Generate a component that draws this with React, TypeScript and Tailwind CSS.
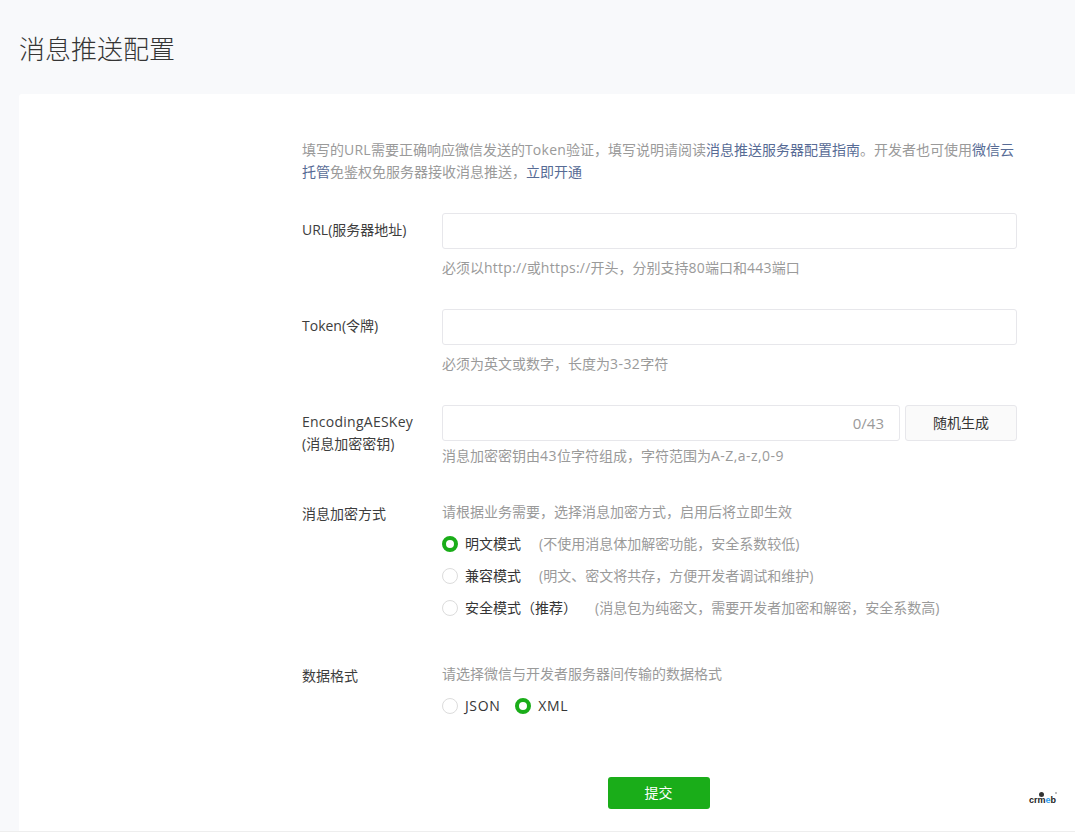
const font = "font-['Open_Sans','Noto_Sans_CJK_SC',sans-serif]";

function Radio({ checked, label, note, gap }: { checked?: boolean; label: string; note?: string; gap?: string }) {
  return (
    <label className="flex items-center h-8">
      {checked ? (
        <span className="w-4 h-4 rounded-full border-[4px] border-[#1aad19] bg-white shrink-0" />
      ) : (
        <span className="w-4 h-4 rounded-full border border-[#dcdcdc] bg-white shrink-0" />
      )}
      <span className="ml-[7px] text-sm leading-8 h-8 text-[#353535]">{label}</span>
      {note && <span className={`text-sm leading-8 h-8 text-[#9a9a9a] ${gap}`}>{note}</span>}
    </label>
  );
}

function Label({ children }: { children: React.ReactNode }) {
  return <div className="w-[140px] shrink-0 text-sm leading-[22px] text-[#3d3d3d]">{children}</div>;
}

export default function App() {
  return (
    <div className={`${font} h-[834px] bg-white overflow-hidden`}>
      <div className="h-[832px] bg-[#f8f9fb] pl-[19px] border-b border-[#eeeeee]">
        <h1 className="h-[94px] pt-[32px] text-[26px] leading-[34px] font-light text-[#353535]">消息推送配置</h1>

        <div className="relative h-[737px] bg-white rounded-tl-[3px] pl-[283px] pr-[58px] pt-[45px]">
          <p className="text-sm leading-[22px] text-[#9a9a9a] mb-[30px]">
            填写的<span className="tracking-[0.25px]">URL</span>需要正确响应微信发送的<span className="tracking-[0.25px]">Token</span>验证，填写说明请阅读
            <a className="text-[#576b95]">消息推送服务器配置指南</a>
            。开发者也可使用
            <a className="text-[#576b95]">微信云托管</a>
            免鉴权免服务器接收消息推送，
            <a className="text-[#576b95]">立即开通</a>
          </p>

          <div className="flex mb-[30px]">
            <Label><div className="pt-[6px]">URL(服务器地址)</div></Label>
            <div className="flex-1">
              <input className="block w-full h-9 border border-[#e7e7eb] rounded-[3px] bg-white" />
              <div className="mt-2 text-sm leading-[22px] text-[#9a9a9a]">
                必须以<span className="tracking-[0.25px]">http://</span>或<span className="tracking-[0.25px]">https://</span>开头，分别支持<span className="tracking-[0.25px]">80</span>端口和<span className="tracking-[0.25px]">443</span>端口
              </div>
            </div>
          </div>

          <div className="flex mb-[30px]">
            <Label><div className="pt-[6px]">Token(令牌)</div></Label>
            <div className="flex-1">
              <input className="block w-full h-9 border border-[#e7e7eb] rounded-[3px] bg-white" />
              <div className="mt-2 text-sm leading-[22px] text-[#9a9a9a]">
                必须为英文或数字，长度为<span className="tracking-[0.45px]">3-32</span>字符
              </div>
            </div>
          </div>

          <div className="flex mb-[34px]">
            <Label>
              <div className="pt-[6px] tracking-[0.25px]">EncodingAESKey</div>
              <div>(消息加密密钥)</div>
            </Label>
            <div className="flex-1">
              <div className="flex gap-[5px]">
                <div className="flex-1 h-9 border border-[#e7e7eb] rounded-[3px] bg-white flex items-center justify-end pr-[15px] text-[15px] text-[#9a9a9a]">0/43</div>
                <button className="w-28 h-9 border border-[#e7e7eb] rounded-[3px] bg-[#fafafa] text-sm text-[#353535]">随机生成</button>
              </div>
              <div className="mt-1 text-sm leading-[22px] text-[#9a9a9a]">
                消息加密密钥由<span className="tracking-[0.45px]">43</span>位字符组成，字符范围为<span className="tracking-[0.45px]">A-Z,a-z,0-9</span>
              </div>
            </div>
          </div>

          <div className="flex mb-[39px]">
            <Label><div className="pt-[2px]">消息加密方式</div></Label>
            <div className="flex-1">
              <div className="text-sm leading-[22px] text-[#9a9a9a] mb-[5px]">请根据业务需要，选择消息加密方式，启用后将立即生效</div>
              <Radio checked label="明文模式" note="(不使用消息体加解密功能，安全系数较低)" gap="ml-[18px]" />
              <Radio label="兼容模式" note="(明文、密文将共存，方便开发者调试和维护)" gap="ml-[18px]" />
              <Radio label="安全模式（推荐）" note="(消息包为纯密文，需要开发者加密和解密，安全系数高)" gap="ml-[18px]" />
            </div>
          </div>

          <div className="flex mb-[55px]">
            <Label><div className="pt-[2px]">数据格式</div></Label>
            <div className="flex-1">
              <div className="text-sm leading-[22px] text-[#9a9a9a] mb-[5px]">请选择微信与开发者服务器间传输的数据格式</div>
              <div className="flex gap-[15px] [&_span]:tracking-[0.6px]">
                <Radio label="JSON" />
                <Radio checked label="XML" />
              </div>
            </div>
          </div>

          <div className="flex justify-center pr-[2px]">
            <button className="w-[102px] h-8 rounded-[3px] bg-[#1aad19] text-white text-sm">提交</button>
          </div>

          <div className="absolute right-[19px] bottom-[26px] flex items-end text-[9px] leading-[10px] font-bold text-[#222] font-['Liberation_Sans',sans-serif]">
            <span>cr</span>
            <span className="relative">
              m
              <span className="absolute left-[2px] -top-[3px] w-[5px] h-[5px] rounded-full bg-[#333]" />
            </span>
            <span className="text-[#2b9cf2]">e</span>
            <span className="relative">
              b
              <span className="absolute -right-px -top-[3px] w-[2px] h-[2px] rounded-full bg-[#aaa]" />
            </span>
          </div>
        </div>
      </div>
    </div>
  );
}
